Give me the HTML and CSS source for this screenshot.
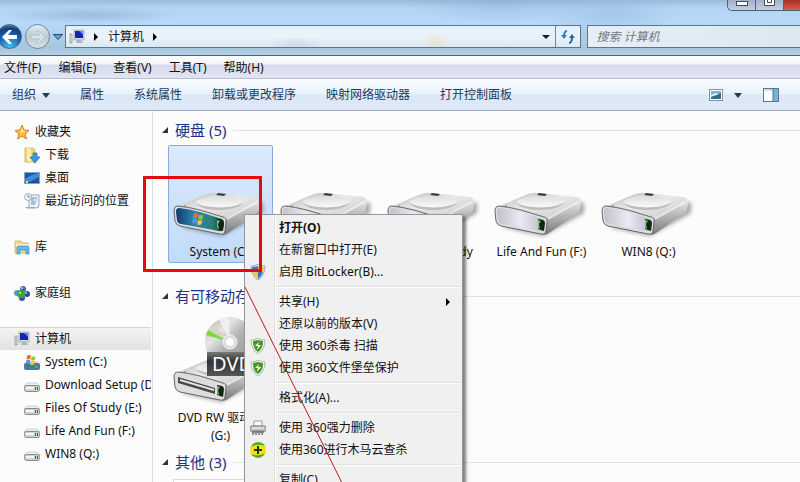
FILE: index.html
```html
<!DOCTYPE html>
<html lang="zh-CN">
<head>
    <meta charset="UTF-8">
    <meta name="viewport" content="width=device-width, initial-scale=1.0">
    <title>计算机</title>
    <link rel="stylesheet" href="styles.css">
</head>
<body>

    <!-- Shared icons -->
    <svg class="sprite" aria-hidden="true">
        <defs>
            <linearGradient id="topGrad" x1="0" y1="0" x2="1" y2="1">
                <stop offset="0" stop-color="#b4b4b4"/>
                <stop offset=".45" stop-color="#e9e9e9"/>
                <stop offset="1" stop-color="#c9c9c9"/>
            </linearGradient>
            <linearGradient id="sideGrad" x1="0" y1="0" x2="0" y2="1">
                <stop offset="0" stop-color="#ececec"/>
                <stop offset=".5" stop-color="#b2b2b2"/>
                <stop offset="1" stop-color="#777"/>
            </linearGradient>
            <linearGradient id="faceGrad" x1="0" y1="0" x2="1" y2="0">
                <stop offset="0" stop-color="#c2c2cc"/>
                <stop offset=".5" stop-color="#e9e9f8"/>
                <stop offset="1" stop-color="#b9b9c2"/>
            </linearGradient>
            <linearGradient id="sysGrad" x1="0" y1="0" x2="1" y2="0">
                <stop offset="0" stop-color="#123c6b"/>
                <stop offset=".4" stop-color="#2f87b4"/>
                <stop offset=".75" stop-color="#2b7f77"/>
                <stop offset="1" stop-color="#123c3a"/>
            </linearGradient>
            <linearGradient id="dishGrad" x1="0" y1="0" x2="0" y2="1">
                <stop offset="0" stop-color="#dedede"/>
                <stop offset="1" stop-color="#fafafa"/>
            </linearGradient>
            <linearGradient id="discGrad" x1="0" y1="0" x2="1" y2="1">
                <stop offset="0" stop-color="#a9a9a9"/>
                <stop offset=".3" stop-color="#e6e6e6"/>
                <stop offset=".5" stop-color="#b5b5b5"/>
                <stop offset="1" stop-color="#8b8b8b"/>
            </linearGradient>
            <linearGradient id="bannerGrad" x1="0" y1="0" x2="0" y2="1">
                <stop offset="0" stop-color="#777"/>
                <stop offset=".4" stop-color="#333"/>
                <stop offset="1" stop-color="#555"/>
            </linearGradient>
            <filter id="soft" x="-20%" y="-20%" width="140%" height="140%"><feGaussianBlur stdDeviation="2"/></filter>
        </defs>

        <symbol id="flag" viewBox="0 0 16 16">
            <path d="M3 2c2-1 3-1 5 0L7 7C5 6 4 6 2 7z" fill="#ee6a2c"/>
            <path d="M9 3c2 1 3 1 5 0l-1 5c-2 1-3 1-5 0z" fill="#8cc63c"/>
            <path d="M2 8c2-1 3-1 5 0l-1 5c-2-1-3-1-5 0z" fill="#4a9be6"/>
            <path d="M8 9c2 1 3 1 5 0l-1 5c-2 1-3 1-5 0z" fill="#fbc72e"/>
        </symbol>

        <symbol id="case" viewBox="0 0 96 96">
            <path d="M8 80L49 89 90 66 90 55 60 60z" fill="#000" opacity=".35" filter="url(#soft)"/>
            <path d="M50 70L84 52q3 0 3 4l-1 7q0 2-2 3L55 86q-4 3-7 1z" fill="url(#sideGrad)"/>
            <path d="M3 60L34 47q6-2 12-1L83 50q4 1 3 3L55 71q-2 1-6 0z" fill="url(#topGrad)"/>
            <path d="M54 72L84 55" stroke="#fff" stroke-width="2" opacity=".6"/>
            <ellipse cx="47" cy="55" rx="24" ry="6" fill="url(#dishGrad)"/>
            <path d="M23 56c4 9 41 10 48-1-10 7-37 7-48 1z" fill="#bdbdbd"/>
            <path d="M43 48l2-2 8 1-2 2z" fill="#3c3c3c"/>
            <circle cx="12" cy="59" r="1" fill="#999"/>
            <path d="M5 59q10 1 22 4l23 7q4 1 3 5l-1 9q-1 4-5 3L7 79q-4-1-5-5l-1-10q0-5 4-5z" fill="#ddd" stroke="#666"/>
        </symbol>

        <symbol id="led" viewBox="0 0 96 96">
            <path d="M44 72l5 1q2 1 2 3l-1 8-6-2z" fill="#142414"/>
            <path d="M44 73l3 1-2 3 1 5-2-1z" fill="#74c852"/>
        </symbol>

        <symbol id="drive" viewBox="0 0 96 96">
            <use href="#case"/>
            <path d="M6 61q10 1 21 4l22 7q2 1 2 4l-1 6q-1 3-4 2L8 77q-4-1-4-4l-1-8q0-4 3-4z" fill="url(#faceGrad)"/>
            <use href="#led"/>
        </symbol>

        <symbol id="system-drive" viewBox="0 0 96 96">
            <use href="#case"/>
            <path d="M6 61q10 1 21 4l22 7q2 1 2 4l-1 6q-1 3-4 2L8 77q-4-1-4-4l-1-8q0-4 3-4z" fill="url(#sysGrad)"/>
            <use href="#flag" x="18" y="65" width="14" height="14"/>
            <use href="#led"/>
        </symbol>

        <symbol id="dvd-drive" viewBox="0 0 96 96">
            <circle cx="57" cy="29" r="25" fill="url(#discGrad)"/>
            <path d="M57 29L33 22a25 25 0 0 1 2-5z" fill="#77dd30"/>
            <path d="M57 29L35 17a25 25 0 0 1 5-6z" fill="#d9d5c8"/>
            <path d="M57 29L46 6a25 25 0 0 1 10-2z" fill="#f4f4f4" opacity=".8"/>
            <circle cx="57" cy="29" r="7" fill="#dcdcdc" stroke="#f5f5f5"/>
            <circle cx="57" cy="29" r="4" fill="#fdfdfd"/>
            <use href="#case"/>
            <path d="M5 64l37 11v6L5 70z" fill="#4a4a4a"/>
            <path d="M7 66l34 10v2L7 68z" fill="#e8e8e8"/>
            <use href="#led"/>
            <path d="M34 39h62v24H34z" fill="url(#bannerGrad)"/>
            <text x="39" y="58" class="dvd-text">DVD</text>
        </symbol>

        <symbol id="computer" viewBox="0 0 16 16">
            <path d="M1 5h2v9H1z" fill="#e2e2d8" stroke="#858b92" stroke-width=".7"/>
            <path d="M5 1h10v10H5z" fill="#d5dce8" stroke="#8f9bad" stroke-width=".7"/>
            <path d="M6 2h8v7H6z" fill="#1423b4"/>
            <path d="M10 2h4v4z" fill="#5e85ef"/>
            <path d="M8 11h4l2 3H7z" fill="#a9b4c3"/>
        </symbol>

        <symbol id="mini-drive" viewBox="0 0 16 16">
            <path d="M3 6h10l3 3H0z" fill="#f2f2f2" stroke="#b4b4b4" stroke-width=".6"/>
            <rect x=".5" y="8.500" width="15" height="6" rx="2" fill="#d2d2d2" stroke="#8a8a8a"/>
            <path d="M2 10h8v2H2z" fill="#f5f5f5"/>
            <path d="M11 10h1v3h-1zM13 10h1v3h-1z" fill="#3f5f42"/>
        </symbol>

        <symbol id="mini-system" viewBox="0 0 16 16">
            <path d="M2 7h11l3 3H0z" fill="#d7dde0"/>
            <rect x=".5" y="9.500" width="15" height="6" rx="1" fill="#3b7ca5" stroke="#6c7579"/>
            <path d="M11 11h3v3h-3z" fill="#62a54c"/>
            <use href="#flag" x="1" y="0" width="12" height="12"/>
        </symbol>

        <symbol id="shield360" viewBox="0 0 16 16">
            <path d="M8 0q3 2 7 2 0 10-7 14Q1 12 1 2q4 0 7-2z" fill="#ecf2e6" stroke="#94a68b" stroke-width=".7"/>
            <path d="M8 2q3 1 5 1 0 8-5 11Q3 11 3 3q2 0 5-1z" fill="#469426"/>
            <path d="M9 4L5 8h3l-1 4 4-5H8z" fill="#fff"/>
        </symbol>
    </svg>

    <div class="window">
        <header class="glass">
            <div class="caption">
                <button class="caption-button" aria-label="最小化"><svg width="12" height="5"><rect x=".5" y=".5" width="11" height="4" fill="#fff" stroke="#444c5c"/></svg></button>
                <button class="caption-button" aria-label="最大化"><svg width="11" height="6"><path d="M.5 0v5.500h10V0M3.500 0v2.500h4V0" fill="#fff" stroke="#444c5c"/></svg></button>
                <button class="caption-button close" aria-label="关闭"></button>
            </div>

            <div class="nav-row">
                <div class="history">
                    <button class="round back" aria-label="后退"><svg width="16" height="14" viewBox="0 0 16 14"><path d="M7 0h3L6 5h9v4H6l4 5H7L0 7z" fill="#fff"/></svg></button>
                    <button class="round forward" aria-label="前进"><svg width="16" height="14" viewBox="0 0 16 14"><path d="M9 1H6l4 4H1v4h9l-4 4h3l6-6z" fill="#d9e2e8" stroke="#b5c3cc"/></svg></button>
                    <button class="plain recent" aria-label="最近的页面"><svg width="10" height="6"><path d="M.5.500h9L5 5.500z" fill="#5aa5d8" stroke="#1d4870"/></svg></button>
                </div>
                <div class="address">
                    <svg class="icon" aria-hidden="true"><use href="#computer"/></svg>
                    <svg class="crumb-arrow" viewBox="0 0 4 8" aria-hidden="true"><path d="M0 0l4 4-4 4z"/></svg>
                    <button class="plain">计算机</button>
                    <svg class="crumb-arrow" viewBox="0 0 4 8" aria-hidden="true"><path d="M0 0l4 4-4 4z"/></svg>
                    <button class="plain drop" aria-label="以前的位置"><svg width="8" height="4"><path d="M0 0h8L4 4z" fill="#0d1b3d"/></svg></button>
                    <button class="plain refresh" aria-label="刷新">
                        <svg width="14" height="14" viewBox="0 0 14 14"><path d="M6 1Q3 1 3 7" fill="none" stroke="#2c7cc4" stroke-width="2"/><path d="M0 5h6L3 9z" fill="#2c7cc4"/><path d="M8 13q3 0 3-6" fill="none" stroke="#2668a8" stroke-width="2"/><path d="M8 8h6l-3-4z" fill="#2668a8"/></svg>
                    </button>
                </div>
                <input class="search" type="search" placeholder="搜索 计算机" aria-label="搜索 计算机">
            </div>
        </header>

        <nav class="menubar">
            <button class="plain">文件(F)</button>
            <button class="plain">编辑(E)</button>
            <button class="plain">查看(V)</button>
            <button class="plain">工具(T)</button>
            <button class="plain">帮助(H)</button>
        </nav>

        <div class="toolbar">
            <button class="plain organize">组织 <svg width="8" height="5"><path d="M0 0h8L4 5z" fill="#1e395b"/></svg></button>
            <button class="plain">属性</button>
            <button class="plain">系统属性</button>
            <button class="plain">卸载或更改程序</button>
            <button class="plain">映射网络驱动器</button>
            <button class="plain">打开控制面板</button>
            <div class="view-tools">
                <button class="plain" aria-label="更改视图"><svg width="14" height="12"><rect x=".5" y=".5" width="13" height="11" fill="#fff" stroke="#8492a6"/><path d="M2 2h10v8H2z" fill="#74b4de"/><path d="M2 7l4-1 6-2v6H2z" fill="#2f6d80"/><path d="M2 6l5-2 3 1-8 3z" fill="#dcf3fb"/></svg></button>
                <button class="plain" aria-label="更多选项"><svg width="8" height="5"><path d="M0 0h8L4 5z" fill="#1e395b"/></svg></button>
                <button class="plain preview" aria-label="显示预览窗格"><svg width="16" height="14"><rect x=".5" y=".5" width="15" height="13" fill="#fff" stroke="#5b7594"/><path d="M1 1h9v2H1z" fill="#d4dfe9"/><path d="M10 1h5v12h-5z" fill="#75b5d3"/><path d="M10 1v12" stroke="#4f7795"/></svg></button>
            </div>
        </div>

        <div class="content">
            <aside class="sidebar">
                <div class="tree">
                    <a href="#" class="root"><svg class="icon" viewBox="0 0 16 16"><path d="M8 1l2 5 5 .5-4 3.500 1.500 5L8 12l-4.500 3L5 10 1 6.500 6 6z" fill="#ffc23c" stroke="#dc7b1e"/><path d="M8 3l1 4 3 .5-5 1z" fill="#fff0a8"/></svg>收藏夹</a>
                    <a href="#"><svg class="icon" viewBox="0 0 16 16"><path d="M1 1h8l2 2v12H1z" fill="#f3d778" stroke="#c7a347" stroke-width=".7"/><path d="M3 0l4 2v13l-4-1z" fill="#fcebaa"/><path d="M9 6h4v4h3l-5 6-5-6h3z" fill="#359ae5" stroke="#1a66ae" stroke-width=".7"/></svg>下载</a>
                    <a href="#"><svg class="icon" viewBox="0 0 16 16"><path d="M0 2h16v12H0z" fill="#8ca5bd"/><path d="M1 3h14v9H1z" fill="#1c55ac"/><path d="M1 9Q8 4 15 3v4L6 12H1z" fill="#4289d4"/><path d="M1 12h14v1H1z" fill="#234369"/><path d="M2 11h2v2H2z" fill="#b7ebf3"/></svg>桌面</a>
                    <a href="#"><svg class="icon" viewBox="0 0 16 16"><path d="M5 2h10v10q0 3-3 3H3q3-1 2-4z" fill="#eef3f8" stroke="#8192a3" stroke-width=".8"/><path d="M7 5h6M7 7h3M7 9h5M7 11h4M12 7h1" stroke="#6387b4"/><circle cx="4" cy="4" r="3.500" fill="#f6f6f6" stroke="#96a1ac" stroke-width=".8"/><path d="M4 2v2h2" fill="none" stroke="#53626f" stroke-width=".8"/><path d="M1 14h10v1H2z" fill="#a0acb8"/></svg>最近访问的位置</a>
                </div>
                <div class="tree">
                    <a href="#" class="root"><svg class="icon" viewBox="0 0 16 16"><path d="M1 2h6l1 2h6v10H1z" fill="#f5dc83" stroke="#c5a54d" stroke-width=".7"/><path d="M2 5h12v2H2z" fill="#fff5c7"/><path d="M3 15V9q0-2 2-2h8q2 0 2 2v6h-3v-4H6v4z" fill="#64baf0" stroke="#378bc4" stroke-width=".7"/></svg>库</a>
                </div>
                <div class="tree">
                    <a href="#" class="root"><svg class="icon" viewBox="0 0 16 16"><circle cx="9" cy="4" r="3" fill="#3b62bd"/><circle cx="3" cy="8" r="3" fill="#4d9cd4"/><circle cx="13" cy="9" r="3" fill="#2a4ca4"/><circle cx="8" cy="13" r="3" fill="#2d54b0"/><circle cx="7" cy="9" r="4" fill="#40a438"/><circle cx="8" cy="3" r="1" fill="#c6dcff"/><circle cx="6" cy="8" r="1" fill="#ccf3b4"/><circle cx="12" cy="8" r="1" fill="#a9c4f3"/></svg>家庭组</a>
                </div>
                <div class="tree">
                    <a href="#" class="root selected"><svg class="icon"><use href="#computer"/></svg>计算机</a>
                    <a href="#"><svg class="icon"><use href="#mini-system"/></svg>System (C:)</a>
                    <a href="#"><svg class="icon"><use href="#mini-drive"/></svg>Download Setup (D:)</a>
                    <a href="#"><svg class="icon"><use href="#mini-drive"/></svg>Files Of Study (E:)</a>
                    <a href="#"><svg class="icon"><use href="#mini-drive"/></svg>Life And Fun (F:)</a>
                    <a href="#"><svg class="icon"><use href="#mini-drive"/></svg>WIN8 (Q:)</a>
                </div>
            </aside>

            <main class="files">
                <section>
                    <h2><svg width="6" height="6"><path d="M6 0v6H0z" fill="#333"/></svg>硬盘 (5)</h2>
                    <div class="tiles">
                        <a href="#" class="tile active"><svg class="big-icon"><use href="#system-drive"/></svg><span>System (C:)</span></a>
                        <a href="#" class="tile"><svg class="big-icon"><use href="#drive"/></svg><span>Download Setup (D:)</span></a>
                        <a href="#" class="tile"><svg class="big-icon"><use href="#drive"/></svg><span>Files Of Study (E:)</span></a>
                        <a href="#" class="tile"><svg class="big-icon"><use href="#drive"/></svg><span>Life And Fun (F:)</span></a>
                        <a href="#" class="tile"><svg class="big-icon"><use href="#drive"/></svg><span>WIN8 (Q:)</span></a>
                    </div>
                </section>
                <section>
                    <h2><svg width="6" height="6"><path d="M6 0v6H0z" fill="#333"/></svg>有可移动存储的设备 (1)</h2>
                    <div class="tiles">
                        <a href="#" class="tile"><svg class="big-icon"><use href="#dvd-drive"/></svg><span>DVD RW 驱动器 (G:)</span></a>
                    </div>
                </section>
                <section>
                    <h2><svg width="6" height="6"><path d="M6 0v6H0z" fill="#333"/></svg>其他 (3)</h2>
                    <div class="tiles">
                        <a href="#" class="tile"><span class="thumb"></span></a>
                    </div>
                </section>
            </main>
        </div>
    </div>

    <!-- Right-click menu -->
    <div class="context-menu" role="menu">
        <button class="default" role="menuitem">打开(O)</button>
        <button role="menuitem">在新窗口中打开(E)</button>
        <button role="menuitem"><svg class="icon" viewBox="0 0 16 16"><path d="M8 0q3 2 7 2 0 10-7 14Q1 12 1 2q4 0 7-2z" fill="#e8e8e8" stroke="#8b8b8b" stroke-width=".7"/><path d="M8 2v6H3q-1-2-1-5 3 0 6-1z" fill="#3573ca"/><path d="M8 2v6h5q1-2 1-5-3 0-6-1z" fill="#f3c83b"/><path d="M8 8v7Q4 12 3 8z" fill="#f3c83b"/><path d="M8 8v7q4-3 5-7z" fill="#3573ca"/></svg>启用 BitLocker(B)...</button>
        <hr>
        <button role="menuitem">共享(H)<svg class="submenu-arrow" viewBox="0 0 4 8"><path d="M0 0l4 4-4 4z"/></svg></button>
        <button role="menuitem">还原以前的版本(V)</button>
        <button role="menuitem"><svg class="icon"><use href="#shield360"/></svg>使用 360杀毒 扫描</button>
        <button role="menuitem"><svg class="icon"><use href="#shield360"/></svg>使用 360文件堡垒保护</button>
        <hr>
        <button role="menuitem">格式化(A)...</button>
        <hr>
        <button role="menuitem"><svg class="icon" viewBox="0 0 16 16"><path d="M4 1h8v5H4z" fill="#fafafa" stroke="#999"/><path d="M1 6h14l1 2v3H0V8z" fill="#c5c5c5" stroke="#808080"/><path d="M2 8h12" stroke="#f5f5f5"/><path d="M2 11h12v2H2z" fill="#777"/><path d="M3 12v3M6 12v3M9 12v3M12 12v3" stroke="#909090" stroke-width="2"/></svg>使用 360强力删除</button>
        <button role="menuitem"><svg class="icon" viewBox="0 0 16 16"><circle cx="8" cy="8" r="8" fill="#f7df16"/><path d="M1 5A8 8 0 0 1 15 4Q8 1 1 5zM15 11A8 8 0 0 1 1 12q8 3 14-1z" fill="#3fae2a"/><path d="M7 4h2v3h3v2H9v3H7V9H4V7h3z" fill="#123d12"/></svg>使用360进行木马云查杀</button>
        <hr>
        <button role="menuitem">复制(C)</button>
    </div>

    <!-- Red annotation -->
    <div class="mark-box"></div>
    <svg class="mark-line" viewBox="0 0 97 196" aria-hidden="true"><path d="M0 0l97 196" stroke="#c8141e"/></svg>

</body>
</html>
```

FILE: styles.css
```css
* {
    box-sizing: border-box;
}
body {
    margin: 0;
    font-family: "Noto Sans", "Noto Sans CJK SC", sans-serif;
    font-size: 12px;
    line-height: 18px;
    color: #111;
    overflow: hidden;
}
a {
    color: inherit;
    text-decoration: none;
}
button {
    font: inherit;
    color: inherit;
}
svg {
    flex: none;
}
.sprite {
    position: absolute;
    width: 0;
    height: 0;
}
.icon {
    width: 16px;
    height: 16px;
}
.plain {
    display: flex;
    align-items: center;
    justify-content: center;
    padding: 0;
    border: none;
    background: none;
    white-space: nowrap;
}
.window {
    display: flex;
    flex-direction: column;
    height: 100vh;
}

/* Title bar and address bar */
.glass {
    background:
        radial-gradient(ellipse 90px 9px at 90px 15px, rgba(110, 140, 175, 0.35), transparent),
        radial-gradient(ellipse 100px 24px at 500px 0, rgba(130, 165, 205, 0.4), transparent),
        radial-gradient(ellipse 70px 30px at 610px 12px, rgba(135, 175, 215, 0.4), transparent),
        linear-gradient(#9cbbd9, #b4d5f6 8px, #b8d9f8 24px, #a4c6df 48px, #b5d2e6);
    border-bottom: 1px solid #46647c;
    padding-bottom: 7px;
}
.caption {
    display: flex;
    justify-content: flex-end;
    align-items: flex-start;
    height: 25px;
}
.caption-button {
    display: flex;
    align-items: flex-end;
    justify-content: center;
    width: 28px;
    height: 11px;
    padding: 0 0 4px;
    border: 1px solid #525f76;
    border-top: none;
    border-right: none;
    background: linear-gradient(#9fb0c9, #c3d0e4);
}
.caption-button:first-child {
    border-bottom-left-radius: 5px;
}
.caption-button.close {
    width: 17px;
    background: linear-gradient(#a83028, #d5604c);
}
.nav-row {
    display: flex;
    align-items: center;
    height: 23px;
}
.history {
    display: flex;
    align-items: center;
    width: 65px;
}
.round {
    display: flex;
    flex: none;
    align-items: center;
    justify-content: center;
    width: 25px;
    height: 25px;
    padding: 0;
    border: 1px solid #4d6880;
    border-radius: 50%;
}
.back {
    margin-left: -3px;
    background: radial-gradient(circle at 50% 95%, #3ec0f5, #1b60b2 50%, #123d80 75%, #8eb0d4);
}
.forward {
    margin-left: 3px;
    border-color: #71889a;
    background: linear-gradient(#e3ebf2, #bccbd6 50%, #d2e0e9);
}
.recent {
    margin-left: 3px;
}
.address {
    display: flex;
    flex: 492px 1 1;
    align-items: center;
    height: 23px;
    padding-left: 3px;
    border: 1px solid #5d7587;
    background:
        radial-gradient(ellipse 30px 8px at 230px 18px, rgba(150, 150, 190, 0.2), transparent),
        radial-gradient(ellipse 16px 10px at 370px 16px, rgba(240, 205, 140, 0.3), transparent),
        linear-gradient(#e4f0fb, #ebf3fa 50%, #dce8f2);
}
.crumb-arrow {
    width: 4px;
    height: 8px;
    margin: 0 10px 0 9px;
}
.drop {
    width: 18px;
    height: 21px;
    margin-left: auto;
}
.refresh {
    width: 25px;
    height: 21px;
    border-left: 1px solid #6f8799;
}
.search {
    flex: 190px 1 1;
    min-width: 0;
    height: 23px;
    margin-left: 6px;
    padding: 0 9px;
    border: 1px solid #5d7587;
    border-right: none;
    border-radius: 0;
    background: linear-gradient(90deg, #e7eff6, #dfe7ee);
    font: inherit;
    font-style: italic;
}
.search::placeholder {
    color: #6f7780;
}

/* Menu bar and command bar */
.menubar {
    display: flex;
    gap: 17px;
    height: 23px;
    padding: 2px 0 0 4px;
    border-bottom: 1px solid #b3bdd3;
    background: linear-gradient(#fff, #f0f3fa 8px, #d6dcec 9px, #e0e4f3);
}
.toolbar {
    display: flex;
    gap: 30px;
    height: 32px;
    padding: 1px 0 0 12px;
    border-bottom: 1px solid #9aa8c2;
    background: linear-gradient(#fbfdff, #e8f1fb 15px, #dce7f5 16px, #dde9f7);
    color: #1e395b;
}
.organize {
    gap: 6px;
}
.view-tools {
    display: flex;
    gap: 11px;
    margin-left: auto;
    padding-right: 21px;
}
.preview {
    margin-left: 10px;
}

/* Navigation pane */
.content {
    display: flex;
    flex: 1;
    min-height: 0;
    background: #fcfcfc;
}
.sidebar {
    flex: none;
    width: 153px;
    padding: 9px 1px 0 0;
    border-right: 1px solid #d3deee;
    overflow: hidden;
}
.tree {
    margin-bottom: 23px;
    overflow: hidden;
}
.tree a {
    display: flex;
    align-items: center;
    gap: 5px;
    height: 23px;
    padding-left: 24px;
    white-space: nowrap;
}
.tree .root {
    padding-left: 14px;
}
.tree .selected {
    border-top: 1px solid #d5d5d5;
    background: linear-gradient(#f4f4f4, #e2e2e2);
}

/* Drives */
.files {
    flex: 1;
    min-width: 0;
    padding: 4px 0 0 9px;
    overflow: hidden;
}
.files h2 {
    display: flex;
    align-items: center;
    gap: 7px;
    height: 30px;
    margin: 0;
    font-size: 15px;
    font-weight: normal;
    color: #1e3287;
}
.files h2::after {
    content: "";
    flex: 1;
    height: 1px;
    background: #dfe2e6;
}
.tiles {
    display: flex;
    align-items: flex-start;
    gap: 2px;
    padding-left: 6px;
}
.tile {
    display: flex;
    flex: none;
    flex-direction: column;
    align-items: center;
    width: 105px;
    padding: 1px;
    border: 1px solid transparent;
    border-radius: 2px;
    text-align: center;
}
.tile span {
    width: 96px;
}
.tile.active {
    border-color: #84acdd;
    background: linear-gradient(#dce9fa, #c1dbfc);
}
.big-icon {
    width: 96px;
    height: 96px;
}
.dvd-text {
    font-family: "Noto Sans", sans-serif;
    font-size: 20px;
    fill: #fff;
}
.thumb {
    height: 96px;
    border: 1px solid #dcdcdc;
    background: #fff;
}

/* Context menu */
.context-menu {
    position: absolute;
    left: 244px;
    top: 214px;
    width: 219px;
    padding: 2px;
    border: 1px solid #979797;
    background: linear-gradient(90deg, transparent 29px, #e0e0e0 29px, #e0e0e0 30px, #fff 30px, #fff 31px, transparent 31px) #f0f0f0;
    box-shadow: 3px 3px 3px rgba(0, 0, 0, 0.5);
}
.context-menu button {
    display: grid;
    grid-template-columns: 23px 1fr auto;
    align-items: center;
    gap: 6px;
    width: 100%;
    height: 22px;
    padding: 0 10px 0 3px;
    border: none;
    background: none;
    text-align: left;
}
.context-menu button::before {
    content: "";
    grid-area: 1 / 1;
}
.context-menu .icon {
    grid-area: 1 / 1;
}
.context-menu .default {
    font-weight: bold;
}
.context-menu hr {
    height: 2px;
    margin: 3px 0 3px 29px;
    border: none;
    border-top: 1px solid #e0e0e0;
    border-bottom: 1px solid #fff;
}
.submenu-arrow {
    width: 4px;
    height: 8px;
}

/* Annotation over the window */
.mark-box {
    position: absolute;
    left: 143px;
    top: 176px;
    width: 119px;
    height: 96px;
    border: 3px solid #e60a10;
}
.mark-line {
    position: absolute;
    left: 245px;
    top: 287px;
    width: 97px;
    height: 196px;
}
```
